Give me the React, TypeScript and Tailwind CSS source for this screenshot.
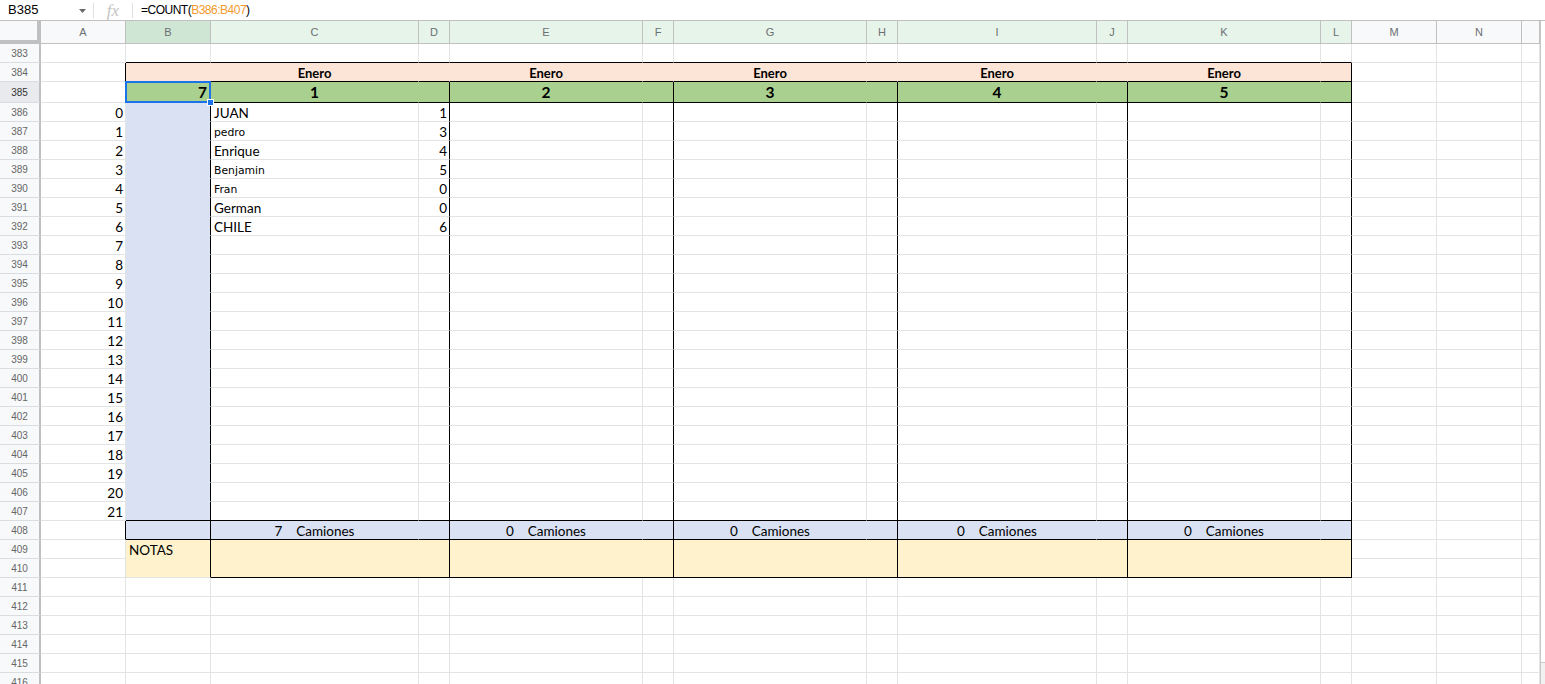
import React from 'react';

// gridline / border colour helpers
const GR = 'border-r-[#e2e3e3]';
const GB = 'border-b-[#e2e3e3]';
const KR = 'border-r-black';
const KB = 'border-b-black';

const PEACH = 'bg-[#fce4d6]';
const PEACH_R = 'border-r-[#fce4d6]';
const GREEN = 'bg-[#a9d08e]';
const GREEN_R = 'border-r-[#a9d08e]';
const BLUE = 'bg-[#d9e1f2]';
const BLUE_R = 'border-r-[#d9e1f2]';
const BLUE_B = 'border-b-[#d9e1f2]';
const YELLOW = 'bg-[#fff2cc]';

const TXT = "font-[family-name:Lato,sans-serif] text-[13.5px] leading-[16px] text-black";
const SMALL = "font-[family-name:'DejaVu_Sans',Verdana,sans-serif] text-[10.8px] leading-[14px] text-black";

type CellProps = {
  r?: string;
  b?: string;
  bg?: string;
  className?: string;
  children?: React.ReactNode;
};

function Cell({ r = GR, b = GB, bg = 'bg-white', className = '', children }: CellProps) {
  return (
    <div className={`relative min-w-0 border-r border-b ${r} ${b} ${bg} ${className}`}>
      {children}
    </div>
  );
}

function RowHead({ n, active = false }: { n: number; active?: boolean }) {
  return (
    <div
      className={`flex items-center justify-center border-r-2 border-b border-r-[#c0c0c0] border-b-[#dadce0] text-[10px] ${
        active ? 'bg-[#e8eaed] text-[#333]' : 'bg-[#f8f9fa] text-[#666]'
      }`}
    >
      {n}
    </div>
  );
}

function ColHead({ label, bg }: { label: string; bg: string }) {
  return (
    <div className={`flex items-center justify-center border-r border-b border-[#c0c0c0] text-[11px] text-[#6b6f73] ${bg}`}>
      {label}
    </div>
  );
}

const COLUMNS: { label: string; bg: string }[] = [
  { label: 'A', bg: 'bg-[#f8f9fa]' },
  { label: 'B', bg: 'bg-[#cfe6d4]' },
  { label: 'C', bg: 'bg-[#e6f4ea]' },
  { label: 'D', bg: 'bg-[#e6f4ea]' },
  { label: 'E', bg: 'bg-[#e6f4ea]' },
  { label: 'F', bg: 'bg-[#e6f4ea]' },
  { label: 'G', bg: 'bg-[#e6f4ea]' },
  { label: 'H', bg: 'bg-[#e6f4ea]' },
  { label: 'I', bg: 'bg-[#e6f4ea]' },
  { label: 'J', bg: 'bg-[#e6f4ea]' },
  { label: 'K', bg: 'bg-[#e6f4ea]' },
  { label: 'L', bg: 'bg-[#e6f4ea]' },
  { label: 'M', bg: 'bg-[#f8f9fa]' },
  { label: 'N', bg: 'bg-[#f8f9fa]' },
  { label: '', bg: 'bg-[#f8f9fa]' },
];

const DRIVERS: { name: string; trips: number; small: boolean }[] = [
  { name: 'JUAN', trips: 1, small: false },
  { name: 'pedro', trips: 3, small: true },
  { name: 'Enrique', trips: 4, small: false },
  { name: 'Benjamin', trips: 5, small: true },
  { name: 'Fran', trips: 0, small: true },
  { name: 'German', trips: 0, small: false },
  { name: 'CHILE', trips: 6, small: false },
];

const WEEKS = [1, 2, 3, 4, 5];
const TRUCKS = [7, 0, 0, 0, 0];

function FormulaBar() {
  return (
    <div className="h-[21px] flex items-center border-b border-[#c0c0c0] bg-white">
      <div className="w-[93px] flex items-center pl-2 pr-[7px] text-[13px] text-black">
        <span className="flex-1">B385</span>
        <svg width="7" height="4" viewBox="0 0 7 4" className="mt-[2px]">
          <path d="M0 0 L7 0 L3.5 4 Z" fill="#6b6b6b" />
        </svg>
      </div>
      <div className="w-px h-[15px] bg-[#e0e0e0]" />
      <div className="w-[38px] flex items-center justify-center font-[family-name:'Liberation_Serif',serif] italic text-[17px] leading-none text-[#c4c4c4]">
        fx
      </div>
      <div className="w-px h-[15px] bg-[#e0e0e0]" />
      <div className="pl-2 text-[12px] tracking-[-0.5px] text-black">
        =COUNT(<span className="text-[#f29a2e]">B386:B407</span>)
      </div>
    </div>
  );
}

function BlankTail() {
  return (
    <>
      <Cell />
      <Cell />
      <Cell />
    </>
  );
}

export default function App() {
  const body: React.ReactNode[] = [];

  // header row with column letters
  body.push(
    <div key="corner" className="border-r-4 border-b-4 border-[#c0c0c0] bg-[#f8f9fa]" />,
  );
  COLUMNS.forEach((c, i) => body.push(<ColHead key={`h${i}`} label={c.label} bg={c.bg} />));

  // 383 - blank row above the table
  body.push(
    <React.Fragment key="r383">
      <RowHead n={383} />
      <Cell />
      {Array.from({ length: 11 }).map((_, i) => (
        <Cell key={i} b={KB} />
      ))}
      <BlankTail />
    </React.Fragment>,
  );

  // 384 - month band
  body.push(
    <React.Fragment key="r384">
      <RowHead n={384} />
      <Cell r={KR} />
      <Cell bg={PEACH} r={PEACH_R} b={KB} />
      {WEEKS.map((w, i) => (
        <React.Fragment key={w}>
          <Cell bg={PEACH} r={PEACH_R} b={KB} className="flex items-end justify-center">
            <span className={`${TXT} text-[13px] font-bold`}>Enero</span>
          </Cell>
          <Cell bg={PEACH} r={i === 4 ? KR : PEACH_R} b={KB} />
        </React.Fragment>
      ))}
      <BlankTail />
    </React.Fragment>,
  );

  // 385 - week numbers, B385 is the active cell
  body.push(
    <React.Fragment key="r385">
      <RowHead n={385} active />
      <Cell />
      <Cell bg={GREEN} r={KR} b={KB} className="flex items-end justify-end pr-[3px]">
        <span className={`${TXT} text-[15.5px] leading-[19px] font-bold`}>7</span>
        <div className="absolute -left-px -top-px -right-px -bottom-px z-10 border-2 border-[#1a73e8]" />
        <div className="absolute -right-[4px] -bottom-[4px] z-20 w-[7px] h-[7px] bg-[#1a73e8] border border-white" />
      </Cell>
      {WEEKS.map((w) => (
        <React.Fragment key={w}>
          <Cell bg={GREEN} r={GREEN_R} b={KB} className="flex items-end justify-center">
            <span className={`${TXT} text-[15.5px] leading-[19px] font-bold`}>{w}</span>
          </Cell>
          <Cell bg={GREEN} r={KR} b={KB} />
        </React.Fragment>
      ))}
      <BlankTail />
    </React.Fragment>,
  );

  // 386 - 407 : one row per slot
  for (let i = 0; i < 22; i++) {
    const last = i === 21;
    const d = DRIVERS[i];
    body.push(
      <React.Fragment key={`r${386 + i}`}>
        <RowHead n={386 + i} />
        <Cell className="flex items-end justify-end pr-[2px]">
          <span className={TXT}>{i}</span>
        </Cell>
        <Cell bg={BLUE} r={KR} b={last ? KB : BLUE_B} />
        <Cell b={last ? KB : GB} className="flex items-end pl-[3px] overflow-hidden">
          {d && <span className={d.small ? SMALL : TXT}>{d.name}</span>}
        </Cell>
        <Cell r={KR} b={last ? KB : GB} className="flex items-end justify-end pr-[2px]">
          {d && <span className={TXT}>{d.trips}</span>}
        </Cell>
        {[0, 1, 2, 3].map((j) => (
          <React.Fragment key={j}>
            <Cell b={last ? KB : GB} />
            <Cell r={KR} b={last ? KB : GB} />
          </React.Fragment>
        ))}
        <BlankTail />
      </React.Fragment>,
    );
  }

  // 408 - weekly totals
  body.push(
    <React.Fragment key="r408">
      <RowHead n={408} />
      <Cell r={KR} />
      <Cell bg={BLUE} r={KR} b={KB} />
      {TRUCKS.map((t, i) => (
        <React.Fragment key={i}>
          <Cell bg={BLUE} r={BLUE_R} b={KB} className="flex items-end justify-center">
            <span className={`${TXT} whitespace-pre`}>{`${t}    Camiones`}</span>
          </Cell>
          <Cell bg={BLUE} r={KR} b={KB} />
        </React.Fragment>
      ))}
      <BlankTail />
    </React.Fragment>,
  );

  // 409 - 410 - notes
  body.push(
    <React.Fragment key="r409">
      <RowHead n={409} />
      <Cell />
      <Cell bg={YELLOW} r={KR} className="row-span-2 pl-[3px]">
        <div className="h-[18px] flex items-end">
          <span className={TXT}>NOTAS</span>
        </div>
      </Cell>
      {WEEKS.map((w) => (
        <Cell key={w} bg={YELLOW} r={KR} b={KB} className="col-span-2 row-span-2" />
      ))}
      <BlankTail />
    </React.Fragment>,
  );
  body.push(
    <React.Fragment key="r410">
      <RowHead n={410} />
      <Cell />
      <BlankTail />
    </React.Fragment>,
  );

  // 411 - 416
  for (let n = 411; n <= 416; n++) {
    body.push(
      <React.Fragment key={`r${n}`}>
        <RowHead n={n} />
        {Array.from({ length: 15 }).map((_, i) => (
          <Cell key={i} />
        ))}
      </React.Fragment>,
    );
  }

  return (
    <div className="w-[1545px] h-[684px] overflow-hidden bg-white flex flex-col font-[family-name:'Liberation_Sans',Arial,sans-serif]">
      <FormulaBar />
      <div className="flex flex-1 min-h-0">
        <div className="w-[1540px] overflow-hidden grid grid-cols-[41px_85px_85px_208px_31px_193px_31px_193px_31px_199px_31px_193px_31px_85px_85px_18px] grid-rows-[23px_19px_19px_21px] auto-rows-[19px] content-start">
          {body}
        </div>
        <div className="w-[5px] flex flex-col border-l border-[#c8c8c8] bg-white">
          <div className="flex-1" />
          <div className="h-[22px] border-t border-[#c8c8c8] bg-[#f1f1f1]" />
        </div>
      </div>
    </div>
  );
}
